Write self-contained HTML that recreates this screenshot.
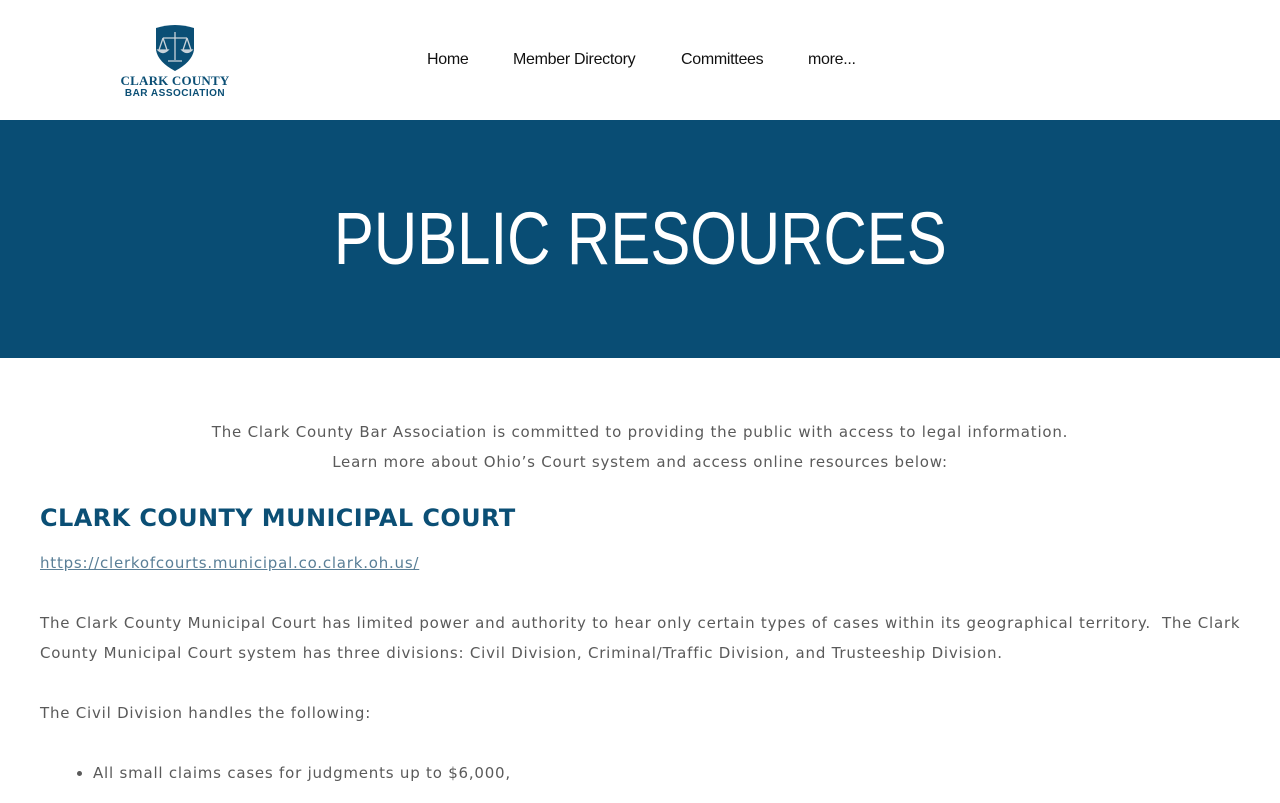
<!DOCTYPE html>
<html><head><meta charset="utf-8"><style>
body{margin:0;background:#fff;font-family:"DejaVu Sans","Liberation Sans",sans-serif;color:#5a5a5a;}
.hdr{height:120px;position:relative;}
.logo{position:absolute;left:118px;top:24px;width:114px;text-align:center;color:#0b4f75;}
.logo .t1{font-family:"Liberation Serif",serif;font-weight:bold;font-size:13px;line-height:14px;letter-spacing:.2px;margin-top:2px;white-space:nowrap}
.logo .t2{font-family:"Liberation Sans",sans-serif;font-weight:bold;font-size:10px;line-height:11px;letter-spacing:.5px;white-space:nowrap}
.nav{position:absolute;top:51px;font-family:"Liberation Sans",sans-serif;font-size:16px;color:#111;letter-spacing:-.3px;}
.banner{background:#094d74;height:238px;color:#fff;text-align:center;font-family:"Liberation Sans",sans-serif;font-size:74px;line-height:238px;}
.banner span{display:inline-block;transform:scaleX(.81);}
.intro{text-align:center;font-size:15px;letter-spacing:.78px;line-height:30px;margin-top:59px;}
h2{margin:21px 0 0 40px;font-family:"DejaVu Sans",sans-serif;font-weight:bold;color:#0b4f75;font-size:24px;letter-spacing:.4px;line-height:40px;}
.p{margin-left:40px;margin-right:30px;font-size:15px;letter-spacing:.78px;line-height:30px;}
a{color:#5a7f97;}
</style></head><body>
<div class="hdr">
<div class="logo">
<svg width="42" height="48" viewBox="0 0 42 48" style="display:block;margin:0 auto"><path d="M2 4 Q21 -2 40 4 L40 26 Q38 38 21 47 Q4 38 2 26Z" fill="#0b4f75"/><g stroke="#c9d3da" stroke-width="1.3" fill="none"><line x1="21" y1="8" x2="21" y2="36"/><line x1="9" y1="14" x2="33" y2="14"/><path d="M9 14 L5 26 M9 14 L13 26 M33 14 L29 26 M33 14 L37 26"/><path d="M4 26 Q9 31 14 26Z M28 26 Q33 31 38 26Z" fill="#c9d3da"/><line x1="14" y1="37" x2="28" y2="37"/></g></svg>
<div class="t1">CLARK COUNTY</div><div class="t2">BAR ASSOCIATION</div>
</div>
<div class="nav" style="left:427px">Home</div>
<div class="nav" style="left:513px">Member Directory</div>
<div class="nav" style="left:681px">Committees</div>
<div class="nav" style="left:808px">more...</div>
</div>
<div class="banner"><span>PUBLIC RESOURCES</span></div>
<div class="intro">The Clark County Bar Association is committed to providing the public with access to legal information.<br>Learn more about Ohio’s Court system and access online resources below:</div>
<h2>CLARK COUNTY MUNICIPAL COURT</h2>
<div class="p" style="margin-top:10px"><a href="#">https://clerkofcourts.municipal.co.clark.oh.us/</a></div>
<div class="p" style="margin-top:30px">The Clark County Municipal Court has limited power and authority to hear only certain types of cases within its geographical territory.&nbsp; The Clark County Municipal Court system has three divisions: Civil Division, Criminal/Traffic Division, and Trusteeship Division.</div>
<div class="p" style="margin-top:30px">The Civil Division handles the following:</div>
<ul class="p" style="margin-top:30px;padding-left:93px;margin-left:0"><li>All small claims cases for judgments up to $6,000,</li></ul>
</body></html>
